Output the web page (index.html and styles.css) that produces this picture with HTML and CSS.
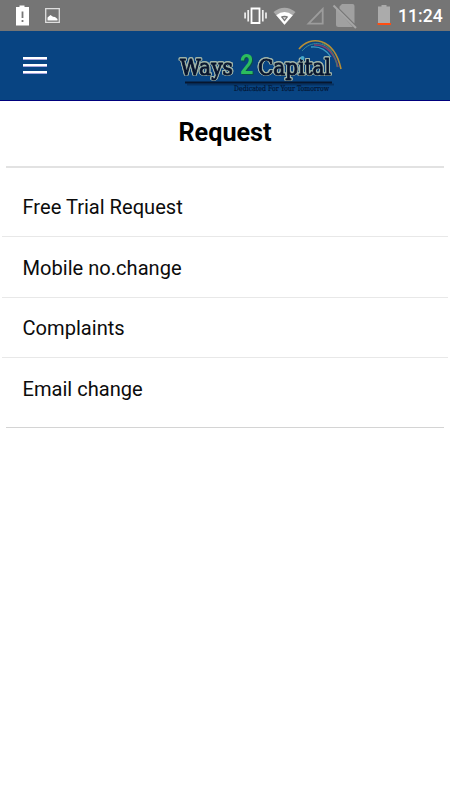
FILE: index.html
```html
<!DOCTYPE html>
<html lang="en">
<head>
<meta charset="utf-8">
<meta name="viewport" content="width=device-width, initial-scale=1">
<title>Request</title>
<link rel="stylesheet" href="styles.css">
</head>
<body>
<div class="status">
  <svg class="status-left" width="50" height="31" viewBox="0 0 50 31" aria-hidden="true">
    <path fill="#fff" d="M4 7h3.500V5.500h5V7H17v18.500H4z"/>
    <path stroke="#777" stroke-width="1.800" d="M10.500 11.500v6.500M10.500 20v2"/>
    <path fill="none" stroke="#dedede" stroke-width="1.300" d="M33.700 8.700h13.600v13.600H33.700z"/>
    <path fill="#fff" d="M35.500 20.500v-3l3-2.500 2.500 1.700 2 .3 2.500 2v1.500z"/>
  </svg>
  <svg class="status-right" width="152" height="31" viewBox="243 0 152 31" aria-hidden="true">
    <path fill="none" stroke="#fff" stroke-width="1.800" d="M251.500 8.500h8v14.500h-8z"/>
    <path stroke="#eee" stroke-width="1.700" d="M248.200 10v11.500M245.100 12.500v6M262.800 10v11.500M266 12.500v6"/>
    <path fill="#aaa" d="M273.500 12Q284.500 3.500 295.500 12l-11 13z"/>
    <path fill="#fff" d="M276.200 15.200Q284.500 9 292.800 15.200l-8.300 9.600z"/>
    <path fill="#777" d="M280.800 16.700q3.700-1.800 7.400 0l-3.700 4.800z"/>
    <path fill="#ddd" d="M282.800 17.300h3.400l-1.700 2.200z"/>
    <path fill="none" stroke="#9c9c9c" stroke-width="1.800" d="M308.500 23.700L322.700 9v14.700z"/>
    <path fill="#a0a0a0" d="M342 4h10.500q2 0 2 2v17.500L339.500 8.500V6.500zM336 8.500v16q0 2.500 2.500 2.500h14.500z"/>
    <path stroke="#a6a6a6" stroke-width="2" d="M333.500 5.500L356 28"/>
    <path fill="#ababab" d="M378 6.500h3.500V5h5v1.500H390V23h-12z"/>
    <path fill="#ff4d12" d="M377.500 23h13.500v2h-13.500z"/>
  </svg>
  <span class="clock">11:24</span>
</div>
<header class="bar">
  <button class="menu" aria-label="Menu"><i></i><i></i><i></i></button>
  <svg class="logo" width="180" height="68" viewBox="170 32 180 68" role="img" aria-label="Ways 2 Capital">
    <g fill="none">
      <path stroke="#b88f35" stroke-width="1.600" d="M299 49C310 35 334 37 341 69"/>
      <path stroke="#398a99" stroke-width="1" d="M302 51C311 40 325 42 332 52"/>
      <path stroke="#3e9bc0" stroke-width="1.300" d="M311 47C320 46 327 51 331 57"/>
      <path stroke="#863f6d" stroke-width="1.600" d="M314 45C327 44 335 55 338 67"/>
      <path stroke="#477f6b" stroke-width="1" d="M322 43C333 49 336 59 337 67"/>
    </g>
    <path class="shadow" d="M187 84.500h147"/>
    <path stroke="#07162e" stroke-width="1.800" d="M185 82.500h147"/>
    <g class="word">
      <text x="180" y="75" textLength="53" lengthAdjust="spacingAndGlyphs">Ways</text>
      <text x="258" y="75" textLength="73" lengthAdjust="spacingAndGlyphs">Capital</text>
    </g>
    <text class="two" x="240" y="74" textLength="13.500" lengthAdjust="spacingAndGlyphs">2</text>
    <circle cx="302.500" cy="58" r="2" fill="#46a9ca"/>
    <text class="tagline" x="234" y="91" textLength="95" lengthAdjust="spacingAndGlyphs">Dedicated For Your Tomorrow</text>
  </svg>
</header>
<main>
  <h1>Request</h1>
  <ul class="list">
    <li>Free Trial Request</li>
    <li>Mobile no.change</li>
    <li>Complaints</li>
    <li>Email change</li>
  </ul>
</main>
</body>
</html>
```
FILE: styles.css
```css
* { box-sizing: border-box; }
body {
  margin: 0;
  min-height: 800px;
  background: #fff;
  color: #0c0c0c;
  font-family: Roboto, sans-serif;
}
.status {
  display: flex;
  height: 31px;
  padding: 0 7px 0 12px;
  background: #757575;
}
.status-right { margin-left: auto; }
.clock {
  width: 48px;
  padding-left: 3px;
  color: #fff;
  font-size: 17.600px;
  font-weight: 500;
  line-height: 33px;
  white-space: nowrap;
}
.bar {
  display: flex;
  height: 70px;
  padding: 1px 0 0 23px;
  background: #084482;
  border-bottom: 1px solid #00007c;
}
.menu {
  display: flex;
  flex-direction: column;
  gap: 4px;
  width: 24px;
  margin: 25px 0 0;
  padding: 0;
  border: 0;
  background: none;
}
.menu i {
  width: 24px;
  height: 3px;
  background: #fff;
  border-bottom: 1px solid #a6a4dc;
}
.logo { margin-left: 123px; }
.word {
  font: 22.500px "DejaVu Serif", serif;
  fill: #07142e;
  stroke: #07142e;
  stroke-width: .9px;
  stroke-linejoin: round;
  filter: drop-shadow(1px 0 0 #9eb3a8) drop-shadow(-1px 0 0 #9eb3a8) drop-shadow(0 .7px 0 #9eb3a8) drop-shadow(0 -.7px .3px #9eb3a8);
}
.two {
  font: bold 28px Roboto, sans-serif;
  fill: #2cbd5e;
  filter: drop-shadow(1px 1px .5px #0b4d4a);
}
.tagline {
  font: 7.500px "DejaVu Serif", serif;
  fill: #041634;
  stroke: #041634;
  stroke-width: .2px;
}
.shadow {
  fill: none;
  stroke: #063263;
  stroke-width: 2px;
}
h1 {
  height: 67px;
  margin: 0 6px;
  padding-top: 1px;
  border-bottom: 2px solid #e2e2e2;
  color: #000;
  font-size: 25.200px;
  font-weight: 700;
  line-height: 61px;
  text-align: center;
}
.list {
  margin: 0;
  padding: 8px 2px 0;
  list-style: none;
}
.list li {
  height: 61px;
  padding-left: 20.500px;
  border-bottom: 1px solid #e8e8e8;
  font-size: 20.100px;
  line-height: 62px;
}
.list li:nth-child(3) {
  height: 60px;
  line-height: 60px;
}
.list li:last-child {
  height: 70px;
  margin: 0 4px;
  padding-left: 16.500px;
  border-bottom-color: #d4d4d4;
}
```
